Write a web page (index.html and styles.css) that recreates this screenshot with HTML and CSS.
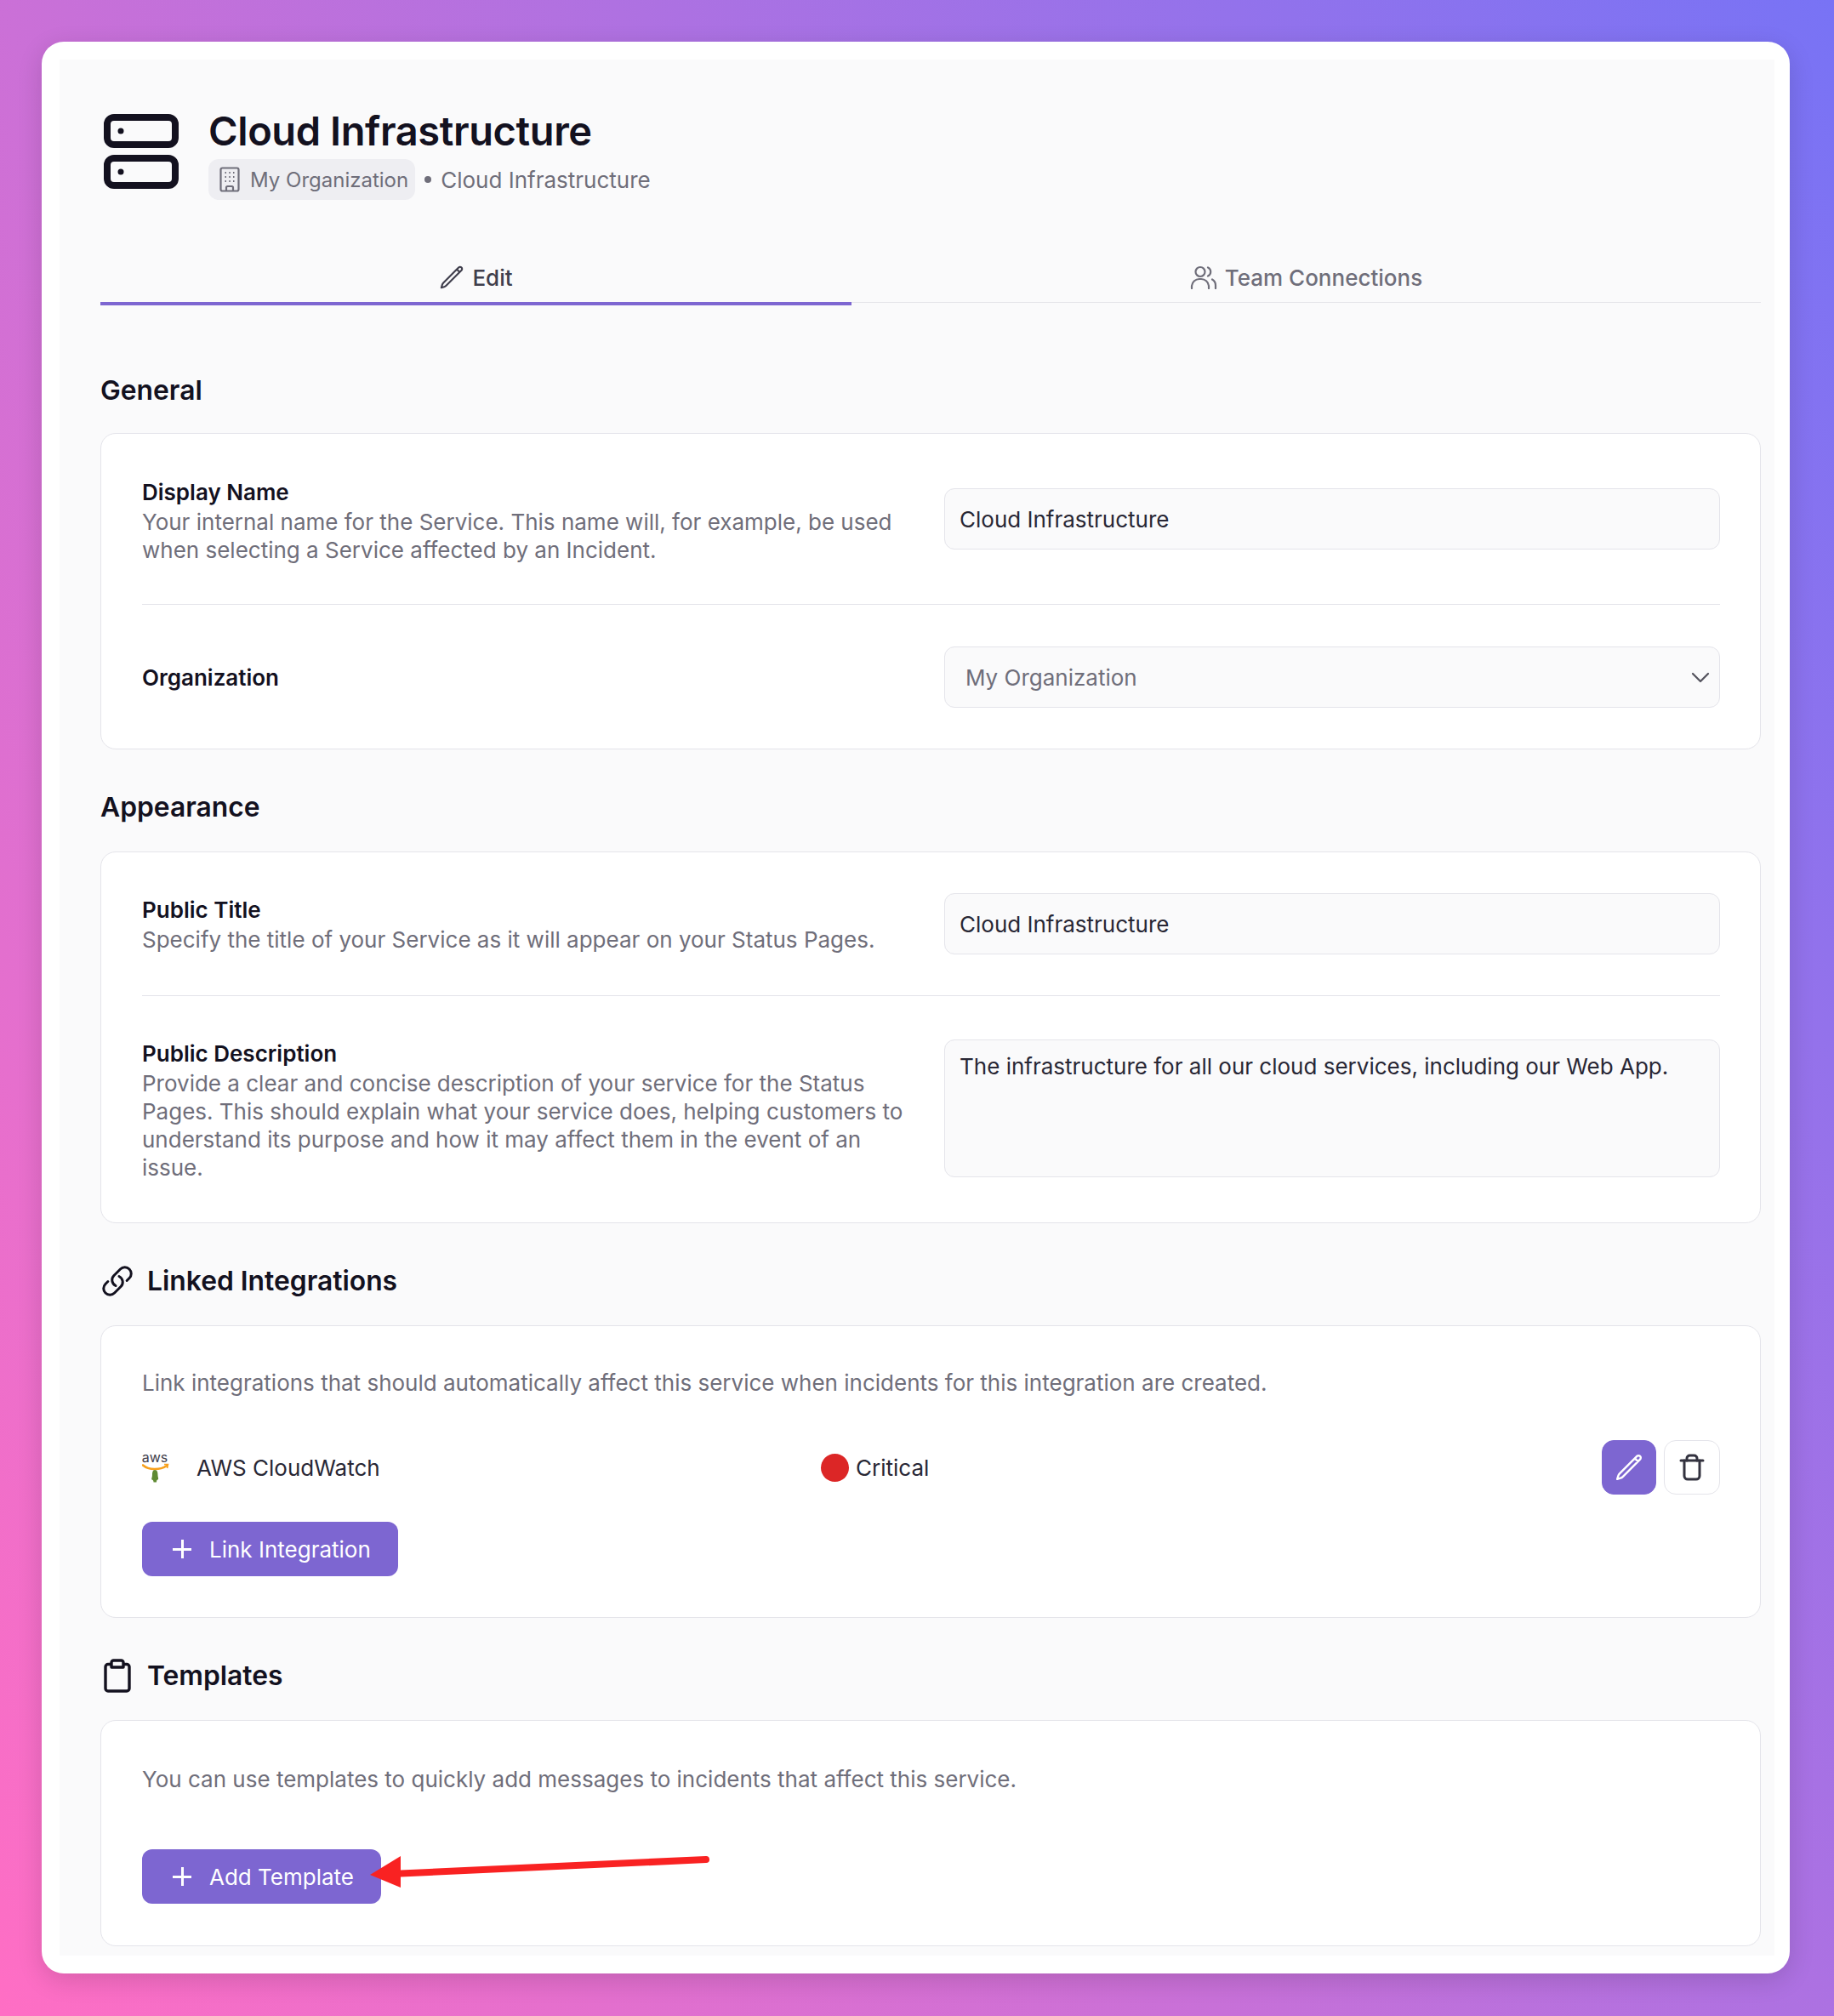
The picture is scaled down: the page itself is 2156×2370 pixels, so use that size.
FILE: index.html
```html
<!DOCTYPE html>
<html lang="en">
<head>
<meta charset="utf-8">
<title>Cloud Infrastructure</title>
<link rel="stylesheet" href="styles.css">
</head>
<body>
<main class="card">
  <div class="page">
    <header class="header">
      <svg class="server-icon" width="96" height="96" viewBox="0 0 96 96" fill="none" stroke="#13111f" stroke-width="8">
        <rect x="8" y="8" width="80" height="32" rx="8"/>
        <rect x="8" y="56" width="80" height="32" rx="8"/>
        <circle cx="24" cy="24" r="3.500" fill="#13111f" stroke="none"/>
        <circle cx="24" cy="72" r="3.500" fill="#13111f" stroke="none"/>
      </svg>
      <div class="header-text">
        <h1 class="title">Cloud Infrastructure</h1>
        <div class="crumbs">
          <span class="chip">
            <svg width="24" height="30" viewBox="0 0 24 30" fill="none" stroke="#6f6e7a" stroke-width="2.200">
              <rect x="1.500" y="1.500" width="21" height="27" rx="2"/>
              <path d="M8 28.500v-4a1.500 1.500 0 0 1 1.500-1.500h5a1.500 1.500 0 0 1 1.500 1.500v4"/>
              <path d="M6.500 7h1.500M11.300 7h1.500M16 7h1.500M6.500 12h1.500M11.300 12h1.500M16 12h1.500M6.500 17h1.500M11.300 17h1.500M16 17h1.500" stroke-width="2"/>
            </svg>
            My Organization
          </span>
          <span class="bullet"></span>
          <span>Cloud Infrastructure</span>
        </div>
      </div>
    </header>

    <nav class="tabs">
      <div class="tab tab-active">
        <svg width="30" height="30" viewBox="0 0 24 24" fill="none" stroke="#3f3e4c" stroke-width="1.700" stroke-linecap="round" stroke-linejoin="round">
          <path d="m16.862 4.487 1.687-1.688a1.875 1.875 0 1 1 2.652 2.652L6.832 19.820a4.500 4.500 0 0 1-1.897 1.130l-2.685.8.8-2.685a4.500 4.500 0 0 1 1.130-1.897L16.863 4.487Zm0 0L19.500 7.125"/>
        </svg>
        Edit
      </div>
      <div class="tab tab-wide">
        <svg width="32" height="28" viewBox="0 0 32 28" fill="none" stroke="#6f6e7a" stroke-width="2.200" stroke-linecap="round">
          <circle cx="12" cy="7.500" r="5.500"/>
          <path d="M2 27v-3a9 9 0 0 1 9-8h2a9 9 0 0 1 9 8v3"/>
          <path d="M21 2.500a5.500 5.500 0 0 1 0 10M26 16.500a8 8 0 0 1 4 7V27"/>
        </svg>
        Team Connections
      </div>
    </nav>

    <h2 class="section-title section-first">General</h2>
    <section class="box">
      <div class="field field-first">
        <div class="field-text field-text-shift">
          <div class="label">Display Name</div>
          <p class="muted">Your internal name for the Service. This name will, for example, be used when selecting a Service affected by an Incident.</p>
        </div>
        <div class="control control-shift"><div class="input">Cloud Infrastructure</div></div>
      </div>
      <div class="field field-last field-center">
        <div class="field-text"><div class="label">Organization</div></div>
        <div class="control">
          <div class="input select">
            <span>My Organization</span>
            <svg width="24" height="24" viewBox="0 0 24 24" fill="none" stroke="#55545f" stroke-width="2.300" stroke-linecap="round" stroke-linejoin="round"><path d="M3 8l9 9 9-9"/></svg>
          </div>
        </div>
      </div>
    </section>

    <h2 class="section-title">Appearance</h2>
    <section class="box">
      <div class="field field-public">
        <div class="field-text">
          <div class="label">Public Title</div>
          <p class="muted">Specify the title of your Service as it will appear on your Status Pages.</p>
        </div>
        <div class="control"><div class="input">Cloud Infrastructure</div></div>
      </div>
      <div class="field field-desc">
        <div class="field-text">
          <div class="label">Public Description</div>
          <p class="muted">Provide a clear and concise description of your service for the Status Pages. This should explain what your service does, helping customers to understand its purpose and how it may affect them in the event of an issue.</p>
        </div>
        <div class="control"><div class="input textarea">The infrastructure for all our cloud services, including our Web App.</div></div>
      </div>
    </section>

    <h2 class="section-title">
      <svg width="40" height="40" viewBox="0 0 24 24" fill="none" stroke="#13111f" stroke-width="1.800" stroke-linecap="round" stroke-linejoin="round">
        <path d="M13.190 8.688a4.500 4.500 0 0 1 1.242 7.244l-4.500 4.500a4.500 4.500 0 0 1-6.364-6.364l1.757-1.757m13.350-.622 1.757-1.757a4.500 4.500 0 0 0-6.364-6.364l-4.500 4.500a4.500 4.500 0 0 0 1.242 7.244"/>
      </svg>
      Linked Integrations
    </h2>
    <section class="box">
      <p class="muted intro">Link integrations that should automatically affect this service when incidents for this integration are created.</p>
      <div class="integration">
        <div class="integration-name">
          <svg class="aws-icon" width="32" height="44" viewBox="0 -4 32 44">
            <text x="15" y="12" text-anchor="middle" class="aws-text">aws</text>
            <path d="M1 15.500c7 6 20 6 28 0.500" fill="none" stroke="#f7a01c" stroke-width="2.600" stroke-linecap="round"/>
            <path d="M26 14.500l4.500 0-1 4.500" fill="none" stroke="#f7a01c" stroke-width="1.600"/>
            <path d="M15 21c3 0 3.500 3 3.500 6 0 3 1.500 4.500 0 5.500-1 .5-1.500 .5-1.500 3h-3.500c0-2.500-1-2.500-2-3-1-1 .5-2.500 .5-5.500 0-3 .5-6 3-6z" fill="#5f8a32"/>
          </svg>
          <span>AWS CloudWatch</span>
        </div>
        <div class="severity"><span class="dot"></span>Critical</div>
        <div class="actions">
          <button class="icon-btn icon-btn-primary" type="button">
            <svg width="34" height="34" viewBox="0 0 24 24" fill="none" stroke="#fff" stroke-width="1.700" stroke-linecap="round" stroke-linejoin="round">
              <path d="m16.862 4.487 1.687-1.688a1.875 1.875 0 1 1 2.652 2.652L6.832 19.820a4.500 4.500 0 0 1-1.897 1.130l-2.685.8.8-2.685a4.500 4.500 0 0 1 1.130-1.897L16.863 4.487Zm0 0L19.500 7.125"/>
            </svg>
          </button>
          <button class="icon-btn" type="button">
            <svg width="30" height="32" viewBox="0 0 30 32" fill="none" stroke="#33323f" stroke-width="3" stroke-linecap="round" stroke-linejoin="round">
              <path d="M2 8h26"/>
              <path d="M6 8v18a4 4 0 0 0 4 4h10a4 4 0 0 0 4-4V8"/>
              <path d="M9 8V5.500a3.500 3.500 0 0 1 3.500-3.500h5A3.500 3.500 0 0 1 21 5.500V8"/>
            </svg>
          </button>
        </div>
      </div>
      <button class="btn" type="button"><span class="plus"></span>Link Integration</button>
    </section>

    <h2 class="section-title">
      <svg width="40" height="40" viewBox="0 0 40 40" fill="none" stroke="#13111f" stroke-width="3.400" stroke-linejoin="round">
        <path d="M13 6.500H9a3 3 0 0 0-3 3V35a3 3 0 0 0 3 3h22a3 3 0 0 0 3-3V9.500a3 3 0 0 0-3-3h-4"/>
        <path d="M13 10V4.500A2.500 2.500 0 0 1 15.500 2h9A2.500 2.500 0 0 1 27 4.500V10z"/>
      </svg>
      Templates
    </h2>
    <section class="box box-last">
      <p class="muted intro-tpl">You can use templates to quickly add messages to incidents that affect this service.</p>
      <div class="annotated">
        <button class="btn" type="button"><span class="plus"></span>Add Template</button>
        <svg class="arrow" width="410" height="44" viewBox="0 0 410 44">
          <path d="M36 23.500L395 7" fill="none" stroke="#f92222" stroke-width="8" stroke-linecap="round"/>
          <path d="M0 25L36 3V40z" fill="#f92222"/>
        </svg>
      </div>
    </section>
  </div>
</main>
</body>
</html>
```

FILE: styles.css
```css
* { box-sizing: border-box; }

html, body { margin: 0; }

body {
  width: 2156px;
  height: 2370px;
  padding: 49px 52px 50px 49px;
  background: linear-gradient(60deg, #ff6ec4 0%, #7873f5 100%);
  font-family: Inter, "Noto Sans", sans-serif;
  font-size: 26px;
  line-height: 33px;
  color: #13111f;
}

.card {
  height: 2271px;
  padding: 21px 18px 21px 21px;
  background: #fff;
  border-radius: 26px;
  box-shadow: 0 8px 30px rgba(0, 0, 0, 0.14);
}

.page {
  height: 100%;
  padding: 60px 16px 11px 48px;
  background: #fafafb;
}

/* Header */
.header {
  display: flex;
  gap: 31px;
  height: 115px;
}

.server-icon { flex: none; }

.title {
  margin: 0;
  height: 52px;
  font-size: 47px;
  line-height: 48px;
  font-weight: 600;
  letter-spacing: -0.4px;
}

.crumbs {
  display: flex;
  align-items: center;
  margin-top: 5px;
  color: #6f6e7a;
  font-size: 26px;
}

.chip {
  display: flex;
  align-items: center;
  gap: 12px;
  height: 48px;
  padding: 0 8px 0 13px;
  background: #eeeef2;
  border-radius: 12px;
  margin-right: 11px;
  font-size: 24px;
}

.bullet {
  width: 8px;
  height: 8px;
  margin-right: 11px;
  border-radius: 50%;
  background: #6f6e7a;
}

/* Tabs */
.tabs {
  display: flex;
  align-items: flex-start;
  height: 111px;
  border-bottom: 1px solid #e4e4e9;
}

.tab {
  display: flex;
  align-items: center;
  justify-content: center;
  gap: 9px;
  height: 114px;
  padding-top: 63px;
  padding-bottom: 15px;
  font-size: 26px;
  font-weight: 500;
  color: #6f6e7a;
}

.tab-active {
  width: 883px;
  color: #3f3e4c;
  border-bottom: 4px solid #7d66d1;
  padding-bottom: 11px;
}

.tab-wide { flex: 1; }

/* Section headings */
.section-title {
  display: flex;
  align-items: center;
  gap: 15px;
  height: 44px;
  margin: 46px 0 30px;
  font-size: 31.800px;
  line-height: 44px;
  font-weight: 600;
}

.section-first { margin: 81px 0 28px; }

.box {
  padding: 48px 47px 48px 48px;
  background: #fff;
  border: 1px solid #e4e4ea;
  border-radius: 18px;
}

.box-last { padding-bottom: 49px; }

/* Form rows */
.field {
  display: flex;
  gap: 38px;
}

.field-first {
  height: 153px;
  border-bottom: 1px solid #e4e4ea;
}

.field-last { padding-top: 49px; }
.field-center { align-items: center; }

.field-public {
  height: 121px;
  border-bottom: 1px solid #e4e4ea;
}

.field-desc { padding-top: 51px; }

.field-text { width: 905px; flex: none; }
.field-public .field-text { padding-top: 3px; }
.field-text-shift { padding-top: 4px; }
.control { width: 912px; flex: none; }
.control-shift { padding-top: 16px; }

.label { font-weight: 600; font-size: 26px; }

.muted {
  margin: 2px 0 0;
  color: #6f6e7a;
  font-size: 26px;
}

.input {
  display: flex;
  align-items: center;
  height: 72px;
  padding: 0 17px;
  background: #fafafb;
  border: 1px solid #e4e4ea;
  border-radius: 12px;
  font-size: 26px;
  color: #282735;
}

.select {
  justify-content: space-between;
  padding: 0 10px 0 24px;
  color: #6f6e7a;
}

.textarea {
  align-items: flex-start;
  height: 162px;
  padding-top: 14px;
}

/* Integrations */
.intro { margin: 0 0 51px; padding-top: 2px; }
.intro-tpl { margin: 0 0 66px; padding-top: 4px; }

.integration {
  display: flex;
  align-items: center;
  height: 64px;
  margin-bottom: 32px;
  font-size: 26px;
  color: #282735;
}

.integration-name {
  display: flex;
  align-items: center;
  gap: 32px;
  width: 798px;
}

.aws-text {
  font-size: 16px;
  line-height: 16px;
  font-family: Inter, sans-serif;
  fill: #3f3e4c;
}

.severity {
  display: flex;
  align-items: center;
  gap: 8px;
}

.dot {
  width: 33px;
  height: 33px;
  border-radius: 50%;
  background: #dc2626;
}

.actions {
  display: flex;
  gap: 9px;
  margin-left: auto;
}

.icon-btn {
  display: flex;
  align-items: center;
  justify-content: center;
  width: 66px;
  height: 64px;
  padding: 0;
  background: #fff;
  border: 1px solid #e4e4ea;
  border-radius: 14px;
}

.icon-btn-primary {
  width: 64px;
  background: #7d66d1;
  border-color: #7d66d1;
}

.btn {
  display: inline-flex;
  align-items: center;
  gap: 21px;
  height: 64px;
  padding: 0 32px 0 36px;
  background: #7d66d1;
  border: 0;
  border-radius: 12px;
  color: #fff;
  font-family: inherit;
  font-size: 26px;
  line-height: 33px;
}

.plus {
  position: relative;
  width: 22px;
  height: 22px;
}

.plus::before,
.plus::after {
  content: "";
  position: absolute;
  background: #fff;
}

.plus::before { left: 10px; top: 0; width: 2.500px; height: 22px; }
.plus::after { left: 0; top: 10px; width: 22px; height: 2.500px; }

/* Red annotation arrow */
.annotated {
  position: relative;
  display: flex;
}

.arrow {
  position: absolute;
  left: 268px;
  top: 5px;
}
```
